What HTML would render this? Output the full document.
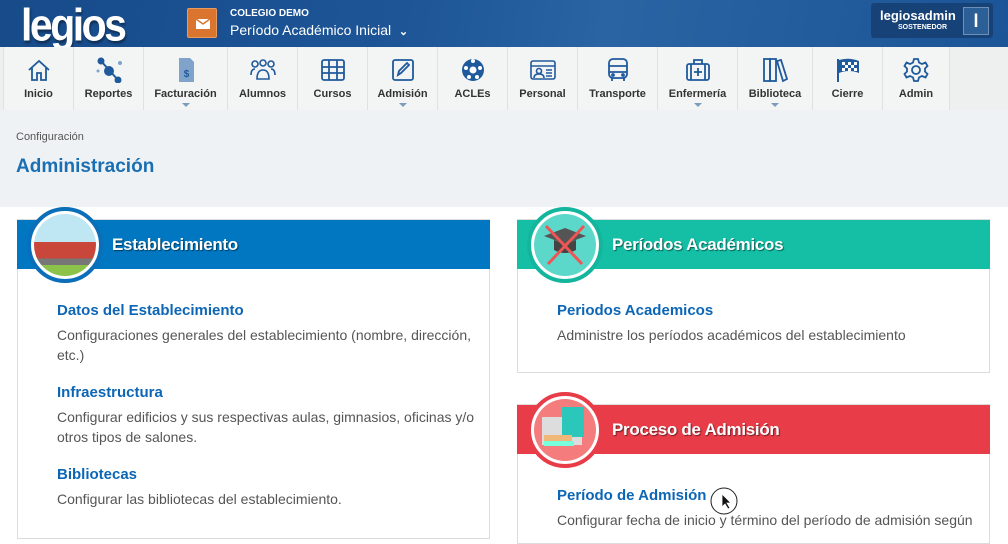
<!DOCTYPE html>
<html><head><meta charset="utf-8"><style>
*{box-sizing:border-box;margin:0;padding:0}
body{width:1008px;height:525px;overflow:hidden;font-family:"Liberation Sans",sans-serif;background:#fff;position:relative}
.top{position:absolute;left:0;top:0;width:1008px;height:47px;background:linear-gradient(100deg,#174b8a 0%,#1d5597 40%,#2a64a3 60%,#1c5597 100%);}
.logo{position:absolute;left:21px;top:0px;color:#fff;font:bold 41px "Liberation Sans",sans-serif;letter-spacing:-2.5px;text-shadow:1px 2px 2px rgba(0,0,0,.4);transform:scaleY(1.1);transform-origin:top left}
.mail{position:absolute;left:187px;top:8px;width:30px;height:30px;background:#d9752f;border:1px solid #e89a5f;border-radius:2px}
.nav{position:absolute;left:0;top:47px;width:1008px;height:63px;background:#eef0f0}
.ni{position:absolute;top:0;height:63px;border-left:1px solid #dfe1e2;background:#f3f4f4;text-align:center;font-size:11px;font-weight:bold;color:#333}
.ni svg{position:absolute;left:50%;top:10px;margin-left:-13px}
.ni span{position:absolute;left:0;right:0;top:41px}
.ni i{position:absolute;left:50%;margin-left:-4px;top:56px;border:4px solid transparent;border-top:4px solid #7d9bbd;border-bottom:0}
.sub{position:absolute;left:0;top:110px;width:1008px;height:97px;background:#eef2f5}
.card{position:absolute;border:1px solid #dcdcdc;background:#fff}
.hd{position:absolute;left:-1px;right:-1px;top:0;height:49px;color:#fff;font-weight:bold;font-size:17px;line-height:49px;padding-left:95px;text-shadow:1px 1px 1px rgba(0,0,0,.5);letter-spacing:-.3px}
.circ{position:absolute;left:9px;top:-13px;width:76px;height:76px;border-radius:50%;background:#fff;border:4px solid;}
.circ div{position:absolute;left:3px;top:3px;right:3px;bottom:3px;border-radius:50%;overflow:hidden}
.lk{position:absolute;left:39px;color:#0c66b5;font-weight:bold;font-size:15px}
.ds{position:absolute;left:39px;color:#555;font-size:14px;line-height:20px;width:420px}
</style></head><body>
<div class="top">
<div class="logo">legios</div>
<div class="mail"><svg width="30" height="30"><rect x="8" y="10" width="14" height="10" fill="#fff"/><path d="M8 10 L15 15 L22 10" stroke="#d9752f" stroke-width="1.5" fill="none"/></svg></div>
<div style="position:absolute;left:230px;top:8px;color:#fff;font-size:10px;font-weight:bold">COLEGIO DEMO</div>
<div style="position:absolute;left:230px;top:22px;color:#fff;font-size:14px">Período Académico Inicial &nbsp;<b style="font-size:11px">⌄</b></div>
<div style="position:absolute;left:871px;top:3px;width:122px;height:35px;background:#174278;border-radius:3px"></div>
<div style="position:absolute;left:880px;top:8px;color:#fff;font-size:13px;font-weight:bold">legiosadmin</div>
<div style="position:absolute;left:898px;top:24px;color:#fff;font-size:7px;font-weight:bold">SOSTENEDOR</div>
<div style="position:absolute;left:963px;top:7px;width:26px;height:28px;background:#2d5f97;border:1px solid #6e8fb6;color:#fff;font-weight:bold;font-size:18px;text-align:center;line-height:26px">l</div>
</div>
<div class="nav">
<div class="ni" style="left:3px;width:70px"><svg width="26" height="26" fill="none" stroke="#1f5a9c" stroke-width="1.8"><path d="M3 13L13 4L23 13M6 11V23H11V16H15V23H20V11"/></svg><span>Inicio</span></div>
<div class="ni" style="left:73px;width:70px"><svg width="26" height="26" fill="#1f5a9c" stroke="#1f5a9c" stroke-width="2"><circle cx="13" cy="14" r="4"/><circle cx="5" cy="4" r="2.5"/><circle cx="22" cy="23" r="2.5"/><path d="M5 4L22 23"/><circle cx="2" cy="14" r="1.5" fill="#7fa3c9" stroke="none"/><circle cx="24" cy="6" r="2" fill="#7fa3c9" stroke="none"/></svg><span>Reportes</span></div>
<div class="ni" style="left:143px;width:84px"><svg width="26" height="26"><path d="M6 1H17L21 5V25H6Z" fill="#7fa3c9"/><text x="13.5" y="20" font-size="10" font-weight="bold" fill="#1f5a9c" text-anchor="middle" font-family="Liberation Sans">$</text></svg><span>Facturación</span><i></i></div>
<div class="ni" style="left:227px;width:70px"><svg width="26" height="26" fill="none" stroke="#1f5a9c" stroke-width="1.6"><circle cx="5" cy="7" r="3"/><circle cx="13" cy="6" r="3"/><circle cx="21" cy="7" r="3"/><path d="M1 18Q1 12 5 12M25 18Q25 12 21 12M7 22Q7 13 13 13Q19 13 19 22Z"/></svg><span>Alumnos</span></div>
<div class="ni" style="left:297px;width:70px"><svg width="26" height="26" fill="none" stroke="#1f5a9c" stroke-width="1.8"><rect x="2" y="3" width="22" height="20" rx="2"/><path d="M2 10H24M2 16H24M9 3V23M17 3V23"/></svg><span>Cursos</span></div>
<div class="ni" style="left:367px;width:70px"><svg width="26" height="26" fill="none" stroke="#1f5a9c" stroke-width="1.8"><rect x="3" y="3" width="20" height="20" rx="2"/><path d="M8 18L9 14L17 6L19 8L11 16Z"/></svg><span>Admisión</span><i></i></div>
<div class="ni" style="left:437px;width:70px"><svg width="26" height="26"><circle cx="13" cy="13" r="11" fill="#1f5a9c"/><circle cx="13" cy="13" r="3.5" fill="#fff"/><circle cx="6" cy="11" r="2" fill="#fff"/><circle cx="20" cy="11" r="2" fill="#fff"/><circle cx="9" cy="20" r="2" fill="#fff"/><circle cx="17" cy="20" r="2" fill="#fff"/><circle cx="13" cy="4" r="2" fill="#fff"/></svg><span>ACLEs</span></div>
<div class="ni" style="left:507px;width:70px"><svg width="26" height="26" fill="none" stroke="#1f5a9c" stroke-width="1.6"><rect x="1" y="4" width="24" height="18" rx="2"/><path d="M1 9H25M16 13H22M16 16H22M16 19H22"/><circle cx="9" cy="14" r="2.5"/><path d="M4 21Q4 17 9 17Q14 17 14 21"/></svg><span>Personal</span></div>
<div class="ni" style="left:577px;width:80px"><svg width="26" height="26" fill="none" stroke="#1f5a9c" stroke-width="1.8"><rect x="4" y="2" width="18" height="19" rx="4"/><path d="M4 9H22M4 15H22M7 21V24M19 21V24"/><circle cx="8" cy="18" r="1"/><circle cx="18" cy="18" r="1"/></svg><span>Transporte</span></div>
<div class="ni" style="left:657px;width:80px"><svg width="26" height="26" fill="none" stroke="#1f5a9c" stroke-width="1.8"><rect x="2" y="7" width="22" height="16" rx="2"/><path d="M9 7V3H17V7M13 11V19M9 15H17M6 7V23M20 7V23"/></svg><span>Enfermería</span><i></i></div>
<div class="ni" style="left:737px;width:75px"><svg width="26" height="26" fill="none" stroke="#1f5a9c" stroke-width="1.8"><rect x="2" y="2" width="6" height="22"/><rect x="8" y="2" width="6" height="22"/><path d="M15 4L19 3L25 22L21 24Z"/></svg><span>Biblioteca</span><i></i></div>
<div class="ni" style="left:812px;width:70px"><svg width="26" height="26"><path d="M3 2V25" stroke="#1f5a9c" stroke-width="2"/><path d="M4 3Q14 0 24 4V16Q14 12 4 16Z" fill="#1f5a9c"/><path d="M7 5H10V8H7ZM13 5H16V8H13ZM19 5H22V8H19ZM10 8H13V11H10ZM16 8H19V11H16ZM7 11H10V14H7ZM13 11H16V14H13ZM19 11H22V14H19Z" fill="#fff"/></svg><span>Cierre</span></div>
<div class="ni" style="left:882px;width:68px;border-right:1px solid #dfe1e2"><svg width="26" height="26" fill="none" stroke="#1f5a9c" stroke-width="1.8"><circle cx="13" cy="13" r="4"/><path d="M11 2H15L16 5.5L19 7L22.5 5.5L24.5 9L22 11.5V14.5L24.5 17L22.5 20.5L19 19L16 20.5L15 24H11L10 20.5L7 19L3.5 20.5L1.5 17L4 14.5V11.5L1.5 9L3.5 5.5L7 7L10 5.5Z"/></svg><span>Admin</span></div>
</div>
<div class="sub">
<div style="position:absolute;left:16px;top:21px;font-size:11px;color:#555">Configuración</div>
<div style="position:absolute;left:16px;top:46px;font-size:19px;font-weight:bold;color:#1a6fb3">Administración</div>
</div>

<div class="card" style="left:17px;top:219px;width:473px;height:320px">
<div class="hd" style="background:#0077c0">Establecimiento</div>
<div class="circ" style="border-color:#0a6fb8"><div style="background:linear-gradient(#bfe6f3 0 45%,#c9463a 45% 72%,#777 72% 82%,#8bc34a 82%)"></div></div>
<div class="lk" style="top:82px">Datos del Establecimiento</div>
<div class="ds" style="top:105px">Configuraciones generales del establecimiento (nombre, dirección, etc.)</div>
<div class="lk" style="top:164px">Infraestructura</div>
<div class="ds" style="top:187px">Configurar edificios y sus respectivas aulas, gimnasios, oficinas y/o otros tipos de salones.</div>
<div class="lk" style="top:246px">Bibliotecas</div>
<div class="ds" style="top:269px">Configurar las bibliotecas del establecimiento.</div>
</div>

<div class="card" style="left:517px;top:219px;width:473px;height:154px">
<div class="hd" style="background:#14bfa6">Períodos Académicos</div>
<div class="circ" style="border-color:#14b59d"><div style="background:#5cd8cb"><svg width="62" height="62"><path d="M10 22L31 14L52 22L31 30Z" fill="#555"/><path d="M20 26V36Q31 42 42 36V26L31 30Z" fill="#444"/><path d="M12 12L48 50M50 12L14 50" stroke="#e55" stroke-width="3"/></svg></div></div>
<div class="lk" style="top:82px">Periodos Academicos</div>
<div class="ds" style="top:105px">Administre los períodos académicos del establecimiento</div>
</div>

<div class="card" style="left:517px;top:404px;width:473px;height:140px">
<div class="hd" style="background:#e83c48">Proceso de Admisión</div>
<div class="circ" style="border-color:#e83c48"><div style="background:#f47c7c"><svg width="62" height="62"><rect x="8" y="18" width="40" height="28" fill="#ddd"/><rect x="28" y="8" width="22" height="30" fill="#2cc7bb"/><rect x="10" y="36" width="28" height="6" fill="#f0b878"/><rect x="10" y="42" width="30" height="5" fill="#7fd"/></svg></div></div>
<div class="lk" style="top:82px">Período de Admisión</div>
<div class="ds" style="top:105px;width:430px">Configurar fecha de inicio y término del período de admisión según</div>
</div>
<svg style="position:absolute;left:709px;top:486px" width="30" height="30"><circle cx="15" cy="15" r="13" fill="none" stroke="#222" stroke-width="1"/><path d="M13 8L13 21L16 18L19 23L21 22L18 17L22 17Z" fill="#111" stroke="#fff" stroke-width=".8"/></svg>
</body></html>
